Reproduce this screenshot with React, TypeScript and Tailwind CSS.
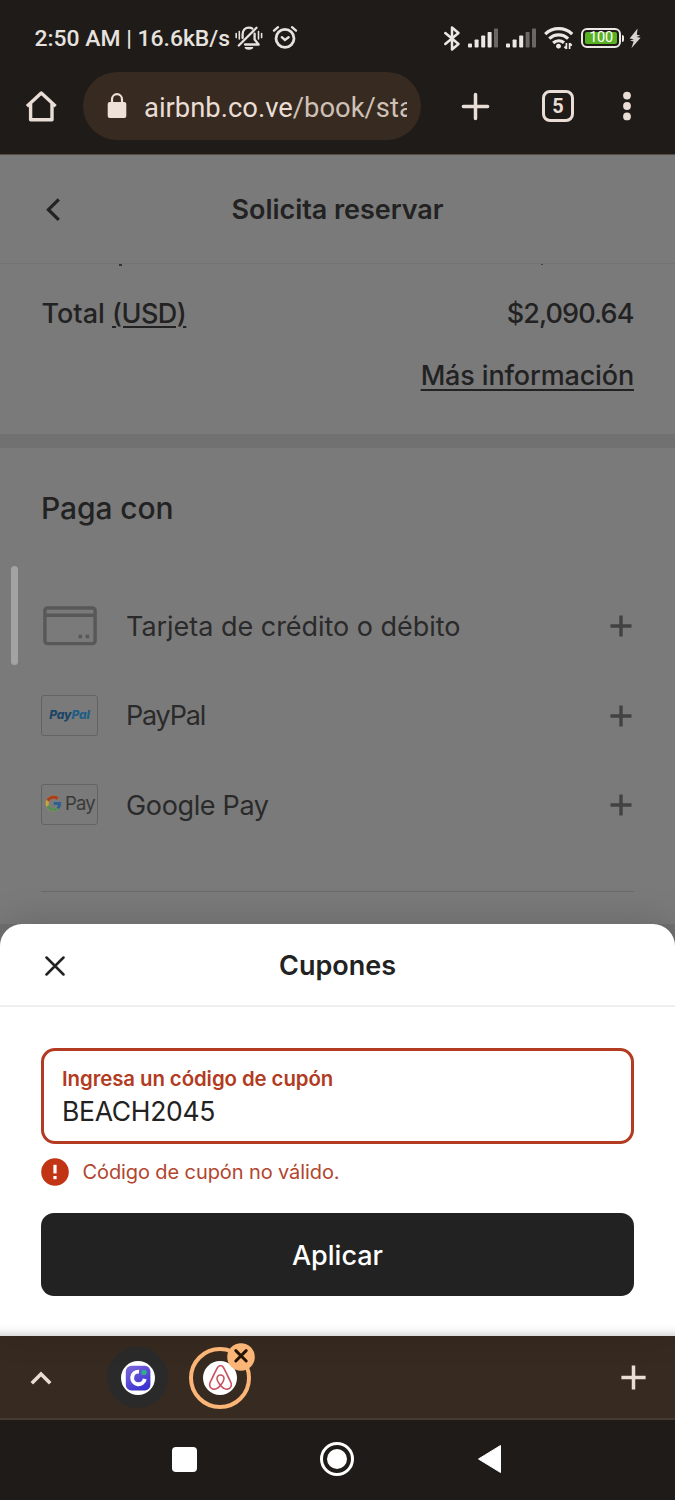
import React from "react";
import { SiAirbnb } from "react-icons/si";
import { FcGoogle } from "react-icons/fc";

function SignalBars({ active }: { active: number }) {
  const bars = [
    { x: 0, h: 4 },
    { x: 6.6, h: 8 },
    { x: 13.2, h: 12 },
    { x: 19.6, h: 15.5 },
    { x: 26, h: 19 },
  ];
  return (
    <svg width="30" height="20" viewBox="0 0 30 20">
      {bars.map((b, i) => (
        <rect key={b.x} x={b.x} y={19.5 - b.h} width="4" height={b.h} rx="0.8" fill={i < active ? "#ece8e5" : "#6b6764"} />
      ))}
    </svg>
  );
}

function MutedBell() {
  return (
    <svg width="28" height="26" viewBox="0 0 28 26" fill="none" stroke="#e6e2df" strokeWidth="2.3" strokeLinecap="round">
      <path d="M3.8 20.5 21.5 2.8" />
      <path d="M7.6 13v-3.5C7.6 5.4 10 2.6 14 2.6c1.4 0 2.4.3 3.3.9" />
      <path d="M19.6 8.6V14.5l4 5H10" strokeLinejoin="round" />
      <path d="M9.6 22h8.6a4.3 2.8 0 0 1-8.6 0Z" fill="#e6e2df" stroke="none" />
      <path d="M1.2 8.6v4M4.3 6.6v7.4M26.6 8.6v4M23.5 6.6v7.4" strokeWidth="1.6" />
    </svg>
  );
}

function Alarm() {
  return (
    <svg width="26" height="26" viewBox="0 0 26 26" fill="none" stroke="#e6e2df" strokeWidth="2.8" strokeLinecap="round">
      <circle cx="13" cy="13.4" r="9" />
      <path d="M9.8 12.2 12.9 15 16.6 12.3" strokeWidth="2.4" />
      <path d="M2 5.6 6 2.2M24 5.6 20 2.2" strokeWidth="2.4" />
    </svg>
  );
}

function StatusBar() {
  return (
    <div className="flex h-[72px] items-start pt-[24px] pl-[34.5px]">
      <span className="h-7 w-[200.5px] whitespace-nowrap text-[22.9px] leading-[30px] font-medium text-[#e6e2df]">2:50 AM | 16.6kB/s</span>
      <div className="flex pt-px">
        <MutedBell />
        <span className="w-[9px]" />
        <Alarm />
      </div>
      <div className="ml-[144px] flex h-[28px] items-center">
        <svg width="20" height="27" viewBox="0 0 20 27" fill="none" stroke="#ece8e5" strokeWidth="2.5" strokeLinejoin="round" strokeLinecap="round">
          <path d="M3.3 8 16.5 19 10 24.5v-22L16.5 8 3.3 19" />
        </svg>
        <span className="ml-[6px]"><SignalBars active={4} /></span>
        <span className="ml-[8px]"><SignalBars active={3} /></span>
        <svg className="ml-[8px]" width="30" height="24" viewBox="0 0 30 24" fill="none" stroke="#ece8e5" strokeWidth="3.2">
          <path d="M1.2 8.1a19.4 19.4 0 0 1 27 0" />
          <path d="M5.3 12.7a13.5 13.5 0 0 1 18.8 0" />
          <path d="M9.2 17a8 8 0 0 1 10.8-.3" />
          <path d="M12 20a3.8 3.8 0 0 1 5 0L14.5 22.4Z" fill="#ece8e5" stroke="none" />
          <circle cx="14.5" cy="20.2" r="2.4" fill="#ece8e5" stroke="none" />
          <path d="M22.4 23v-6M20.4 20.6l2 2.2M25.6 17v6M27.8 19.6l-2-2.2" strokeWidth="1.7" />
        </svg>
        <div className="ml-[7px] flex h-[20px] w-[40px] items-center justify-center rounded-[6px] border-2 border-[#ece8e5] p-[2px]">
          <span className="flex h-[12px] w-full items-center justify-center rounded-[2px] bg-[#59b022] text-[14.5px] leading-none font-normal tracking-[-0.3px] text-white">100</span>
        </div>
        <span className="ml-px h-[7px] w-[2px] rounded-r bg-[#ece8e5]" />
        <svg className="ml-[5px]" width="12" height="21" viewBox="0 0 12 21" fill="#d8d4d1">
          <path d="M8.6.5.6 10.5 5 11.3 1 12.6 4.6 13.4 2.4 20.3 11.6 9.8 7.6 9 11.4 7.4 7.8 6.8Z" />
        </svg>
      </div>
    </div>
  );
}

function Toolbar() {
  return (
    <div className="flex h-[68px] items-center text-[#eaddd6]">
      <svg className="ml-[24px]" width="34" height="34" viewBox="0 0 34 34" fill="none" stroke="#eaddd6" strokeWidth="3.4" strokeLinejoin="round">
        <path d="M3 17.2 17.3 4 31.6 17.2" />
        <path d="M6.6 14.8v16h21.4v-16" />
      </svg>
      <div className="ml-[25px] flex h-[68px] w-[338px] items-center rounded-full bg-[#372a20]">
        <svg className="ml-[24px]" width="20" height="26" viewBox="0 0 20 26">
          <path d="M5 10V6.2a5 5 0 0 1 10 0V10" fill="none" stroke="#efe0d8" strokeWidth="2.2" />
          <rect x="0.7" y="9" width="18.6" height="16" rx="2" fill="#efe0d8" />
        </svg>
        <span className="mt-[3px] ml-[17px] w-[263px] overflow-hidden whitespace-nowrap text-[27.4px] leading-[36px] text-[#eaddd6]">
          airbnb.co.ve<span className="text-[#cfc0b5]">/book/stay</span>
        </span>
      </div>
      <svg className="ml-[40px]" width="29" height="29" viewBox="0 0 29 29" stroke="#eaddd6" strokeWidth="3.5" strokeLinecap="round">
        <path d="M14.5 2.4v24.2M2.4 14.5h24.2" />
      </svg>
      <div className="ml-[52px] flex h-[32px] w-[32px] items-center justify-center rounded-[8px] border-[3.5px] border-[#eaddd6] text-[20px] leading-none font-bold">5</div>
      <svg className="ml-[48px]" width="10" height="30" viewBox="0 0 10 30" fill="#eaddd6">
        <circle cx="5" cy="4.6" r="3.9" />
        <circle cx="5" cy="15" r="3.9" />
        <circle cx="5" cy="25.4" r="3.9" />
      </svg>
    </div>
  );
}

function Plus() {
  return (
    <svg width="22" height="22" viewBox="0 0 22 22" stroke="#424242" strokeWidth="3.4">
      <path d="M11 .5v21M.5 11h21" />
    </svg>
  );
}

function PaymentRow({ icon, label, labelClass }: { icon: React.ReactNode; label: string; labelClass: string }) {
  return (
    <div className="flex h-[89.5px] items-center pr-[43.5px] pl-[41px]">
      <div className="flex w-[85px] items-center">{icon}</div>
      <span className={`pt-[2px] text-[27px] text-[#2a2a2a] ${labelClass}`}>{label}</span>
      <span className="ml-auto pt-px"><Plus /></span>
    </div>
  );
}

function Checkout() {
  return (
    <div className="relative flex h-[769px] flex-col bg-[#7a7a7a] font-[Inter,sans-serif] text-[#222222]">
      <div className="grid h-[109px] grid-cols-[1fr_auto_1fr] items-center border-b border-[#747474]">
        <svg className="ml-[44px]" width="18" height="24" viewBox="0 0 18 24" fill="none" stroke="#222" strokeWidth="3.2">
          <path d="M14.8 2.3 4.4 12.7l10.4 10.2" />
        </svg>
        <h1 className="pt-[3px] text-[27px] font-semibold tracking-[-0.05px]">Solicita reservar</h1>
      </div>
      <div className="flex h-[4px] items-start justify-between pr-[132px] pl-[119px]">
        <span className="h-[2px] w-[3px] bg-[#333]" />
        <span className="h-px w-[2px] bg-[#444]" />
      </div>
      <div className="flex h-[92px] items-center justify-between px-[41.5px] text-[27px] font-medium">
        <span>Total <span className="tracking-[-0.5px] underline decoration-2 underline-offset-[3px]">(USD)</span></span>
        <span className="tracking-[-0.9px]">$2,090.64</span>
      </div>
      <div className="flex h-[32px] items-center justify-end pr-[41px]">
        <span className="text-[27px] font-medium tracking-[-0.15px] underline decoration-2 underline-offset-[4px]">Más información</span>
      </div>
      <div className="mt-[42px] h-[14px] shrink-0 bg-[#717171]" />
      <h2 className="mt-[39.5px] h-[40.5px] pl-[41px] text-[30px] leading-[40px] font-medium tracking-[-0.1px]">Paga con</h2>
      <div className="mt-[53px]">
        <PaymentRow
          label="Tarjeta de crédito o débito"
          labelClass="tracking-[-0.03px]"
          icon={
            <svg className="ml-[2px]" width="54" height="40" viewBox="0 0 54 40" fill="none" stroke="#585858" strokeWidth="3.4">
              <rect x="1.9" y="2" width="50.2" height="35.6" rx="2.5" />
              <path d="M2 9.2h50" />
              <path d="M35.5 30.5h3.6M42.6 30.5h3.6" />
            </svg>
          }
        />
        <PaymentRow
          label="PayPal"
          labelClass="tracking-[-1.2px]"
          icon={
            <span className="flex h-[41px] w-[57px] items-center justify-center rounded-[3px] border border-[#636363] text-[12px] font-extrabold tracking-[-0.1px] text-[#1b4566] italic">
              Pay<span className="text-[#205e85]">Pal</span>
            </span>
          }
        />
        <PaymentRow
          label="Google Pay"
          labelClass="tracking-[-0.35px]"
          icon={
            <span className="flex h-[41px] w-[57px] items-center rounded-[3px] border border-[#636363] pb-[3px] pl-[2px]">
              <FcGoogle size={19} className="shrink-0 brightness-[.85] saturate-[.65]" />
              <span className="ml-[2px] text-[18.5px] leading-5 tracking-[-0.9px] text-[#393939]">Pay</span>
            </span>
          }
        />
      </div>
      <div className="mx-[41px] mt-[41px] h-px shrink-0 bg-[#6a6a6a]" />
      <span className="absolute top-[411px] left-[11px] h-[99px] w-[6.5px] rounded-full bg-[#a3a3a3]" />
    </div>
  );
}

function CouponSheet() {
  return (
    <div className="bg-[#707070]">
      <section className="relative h-[412px] rounded-t-[22px] bg-white font-[Inter,sans-serif] text-[#222222] shadow-[0_-4px_36px_rgba(0,0,0,0.14)]">
        <div className="grid h-[83px] grid-cols-[1fr_auto_1fr] items-center border-b-2 border-[#efefef]">
          <svg className="mt-[2px] ml-[45px]" width="20" height="20" viewBox="0 0 20 20" stroke="#222" strokeWidth="2.5" strokeLinecap="round">
            <path d="M1.5 1.5l17 17M18.5 1.5l-17 17" />
          </svg>
          <h2 className="pt-[3px] text-[27px] font-semibold">Cupones</h2>
        </div>
        <div className="px-[41px] pt-[41px]">
          <div className="h-[96px] rounded-[14px] border-[3.5px] border-[#b23b22] pt-[12.5px] pl-[18px]">
            <div className="text-[20.4px] leading-[30px] font-semibold tracking-[-0.08px] text-[#b23b22]">Ingresa un código de cupón</div>
            <div className="text-[26.5px] leading-[34px] tracking-[-0.3px]">BEACH2045</div>
          </div>
          <div className="mt-[13px] flex h-[30px] items-center">
            <svg width="28" height="28" viewBox="0 0 28 28">
              <circle cx="14" cy="14" r="13.8" fill="#c13515" />
              <path d="M14 6.8v8.6" stroke="#fff" strokeWidth="3.2" />
              <path d="M14 18v3.2" stroke="#fff" strokeWidth="3.2" />
            </svg>
            <span className="ml-[13.5px] text-[20px] tracking-[-0.1px] text-[#b2452d]">Código de cupón no válido.</span>
          </div>
          <button className="mt-[26px] block h-[83px] w-full rounded-[13px] bg-[#222222] pt-[3px] text-[27px] font-medium text-white">Aplicar</button>
        </div>
        <div className="absolute inset-x-0 bottom-0 h-[12px] bg-gradient-to-b from-white via-[#f7f7f7] to-[#dcdcdc]" />
      </section>
    </div>
  );
}

function TabStrip() {
  return (
    <div className="flex h-[84px] items-center border-b-2 border-[#463b33] bg-[#372a20] pt-px">
      <svg className="ml-[30px]" width="22" height="14" viewBox="0 0 22 14" fill="none" stroke="#eaddd6" strokeWidth="3.6">
        <path d="M1.8 12.2 11 3l9.2 9.2" />
      </svg>
      <div className="ml-[55px] flex h-[61px] w-[61px] items-center justify-center rounded-full bg-[#2a2a2a]">
        <svg width="34" height="34" viewBox="0 0 34 34">
          <defs>
            <linearGradient id="tile" x1="0" y1="0" x2="0.6" y2="1">
              <stop offset="0" stopColor="#8069d8" />
              <stop offset="1" stopColor="#3c34d2" />
            </linearGradient>
          </defs>
          <circle cx="17" cy="17" r="17" fill="#fff" />
          <rect x="4.8" y="4.8" width="24.6" height="24.6" rx="5.5" fill="url(#tile)" />
          <path d="M18 10.7a6.3 6.3 0 1 0 5.7 7.2" fill="none" stroke="#fff" strokeWidth="3.9" />
          <circle cx="23" cy="11.4" r="2.7" fill="#2fae8c" />
        </svg>
      </div>
      <div className="relative ml-[21px] flex h-[62px] w-[62px] items-center justify-center rounded-full border-4 border-[#fbb577]">
        <span className="flex h-[34px] w-[34px] items-center justify-center rounded-full bg-white">
          <SiAirbnb size={25} color="#c9505e" />
        </span>
        <svg className="absolute -top-[8px] -right-[8px]" width="28" height="28" viewBox="0 0 28 28">
          <circle cx="14" cy="14" r="13.8" fill="#fbb577" />
          <path d="M8.8 7.6l10.4 10.4M19.2 7.6 8.8 18" stroke="#241408" strokeWidth="3" strokeLinecap="round" />
        </svg>
      </div>
      <svg className="mr-[29px] ml-auto" width="25" height="25" viewBox="0 0 25 25" stroke="#eaddd6" strokeWidth="3.5">
        <path d="M12.5.4v24.2M.4 12.5h24.2" />
      </svg>
    </div>
  );
}

function SystemNav() {
  return (
    <div className="flex h-[80px] items-center bg-[#1f1b18] pb-[2px]">
      <span className="ml-[172px] h-[25px] w-[25px] rounded-[4px] bg-white" />
      <span className="ml-[123px] flex h-[34px] w-[34px] items-center justify-center rounded-full border-[3px] border-white">
        <span className="h-[20px] w-[20px] rounded-full bg-white" />
      </span>
      <svg className="ml-[123px]" width="25" height="30" viewBox="0 0 25 30" fill="#fff" stroke="#fff" strokeLinejoin="round">
        <path d="M23.5 1.5v27L1.5 15Z" />
      </svg>
    </div>
  );
}

export default function App() {
  return (
    <main className="flex h-[1500px] w-[675px] flex-col overflow-hidden bg-[#1f1b18] font-[Roboto,sans-serif]">
      <header className="h-[155px] shrink-0 border-b border-[#574a40]">
        <StatusBar />
        <Toolbar />
      </header>
      <Checkout />
      <CouponSheet />
      <TabStrip />
      <SystemNav />
    </main>
  );
}
